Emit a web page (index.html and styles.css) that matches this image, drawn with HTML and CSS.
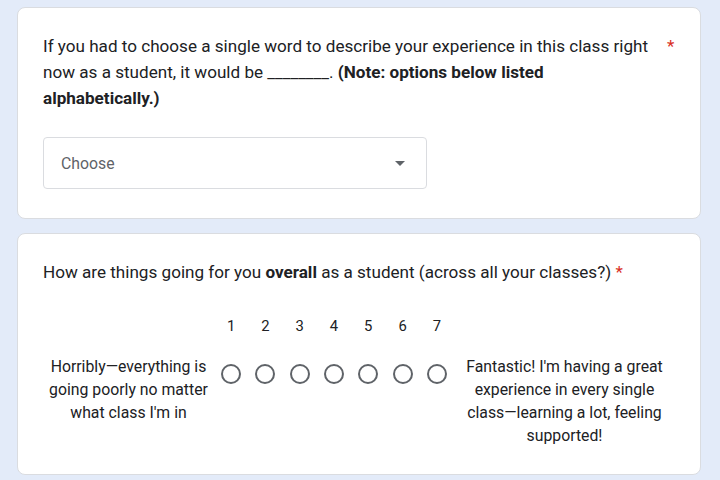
FILE: index.html
```html
<!DOCTYPE html>
<html lang="en">
<head>
    <meta charset="UTF-8">
    <meta name="viewport" content="width=device-width, initial-scale=1.0">
    <title>Class check-in</title>
    <link rel="stylesheet" href="styles.css">
</head>
<body>
    <div class="form">
        <!-- Pregunta 1: lista desplegable -->
        <div class="card">
            <div class="question question-split">
                <div class="question-text">If you had to choose a single word to describe your experience in this class right now as a student, it would be ________. <b>(Note: options below listed alphabetically.)</b></div>
                <span class="required">*</span>
            </div>
            <div class="dropdown">
                <span class="dropdown-label">Choose</span>
                <span class="dropdown-arrow"></span>
            </div>
        </div>

        <!-- Pregunta 2: escala lineal -->
        <div class="card">
            <div class="question">How are things going for you <b>overall</b> as a student (across all your classes?) <span class="required">*</span></div>
            <div class="scale">
                <div class="scale-label"></div>
                <div class="scale-numbers">
                    <span>1</span><span>2</span><span>3</span><span>4</span><span>5</span><span>6</span><span>7</span>
                </div>
                <div class="scale-label"></div>

                <div class="scale-label scale-low">Horribly—everything is going poorly no matter what class I'm in</div>
                <div class="scale-radios">
                    <span class="radio"></span><span class="radio"></span><span class="radio"></span><span class="radio"></span><span class="radio"></span><span class="radio"></span><span class="radio"></span>
                </div>
                <div class="scale-label scale-high">Fantastic! I'm having a great experience in every single class—learning a lot, feeling supported!</div>
            </div>
        </div>
    </div>
</body>
</html>
```

FILE: styles.css
```css
body {
    margin: 0;
    background: #e3ebf9;
    font-family: 'Roboto', 'Liberation Sans', sans-serif;
    color: #202124;
}
.form {
    display: flex;
    flex-direction: column;
    gap: 14px;
    padding: 7px 19px 0 17px;
}
.card {
    background: #ffffff;
    border: 1px solid #dadce0;
    border-radius: 8px;
    padding: 25px 25px 29px 25px;
}
.card + .card {
    padding-bottom: 27px;
}
.question {
    font-size: 17.1px;
    line-height: 26px;
}
.question-split {
    display: flex;
    gap: 14px;
}
.question-text {
    flex: 1;
}
.question-split .required {
    width: 8px;
}
.required {
    color: #d93025;
}
.dropdown {
    margin-top: 26px;
    height: 50px;
    width: 344px;
    border: 1px solid #dadce0;
    border-radius: 4px;
    display: flex;
    align-items: center;
    justify-content: space-between;
    padding: 0 21px 0 17px;
}
.dropdown-label {
    font-size: 15.8px;
    color: #5f6368;
}
.dropdown-arrow {
    width: 0;
    height: 0;
    border-left: 5px solid transparent;
    border-right: 5px solid transparent;
    border-top: 5px solid #5f6368;
}
.scale {
    display: grid;
    grid-template-columns: 171px 240px 1fr;
    row-gap: 19px;
    margin-top: 31px;
}
.scale-numbers,
.scale-radios {
    display: grid;
    grid-template-columns: repeat(7, 1fr);
    justify-items: center;
}
.scale-numbers {
    font-size: 14.8px;
    line-height: 20px;
}
.scale-radios {
    align-items: start;
    padding-top: 9px;
}
.radio {
    width: 16px;
    height: 16px;
    border: 2px solid #5f6368;
    border-radius: 50%;
}
.scale-label {
    text-align: center;
    font-size: 15.8px;
    line-height: 23px;
}
.scale-high {
    padding: 0 6px;
}
```
